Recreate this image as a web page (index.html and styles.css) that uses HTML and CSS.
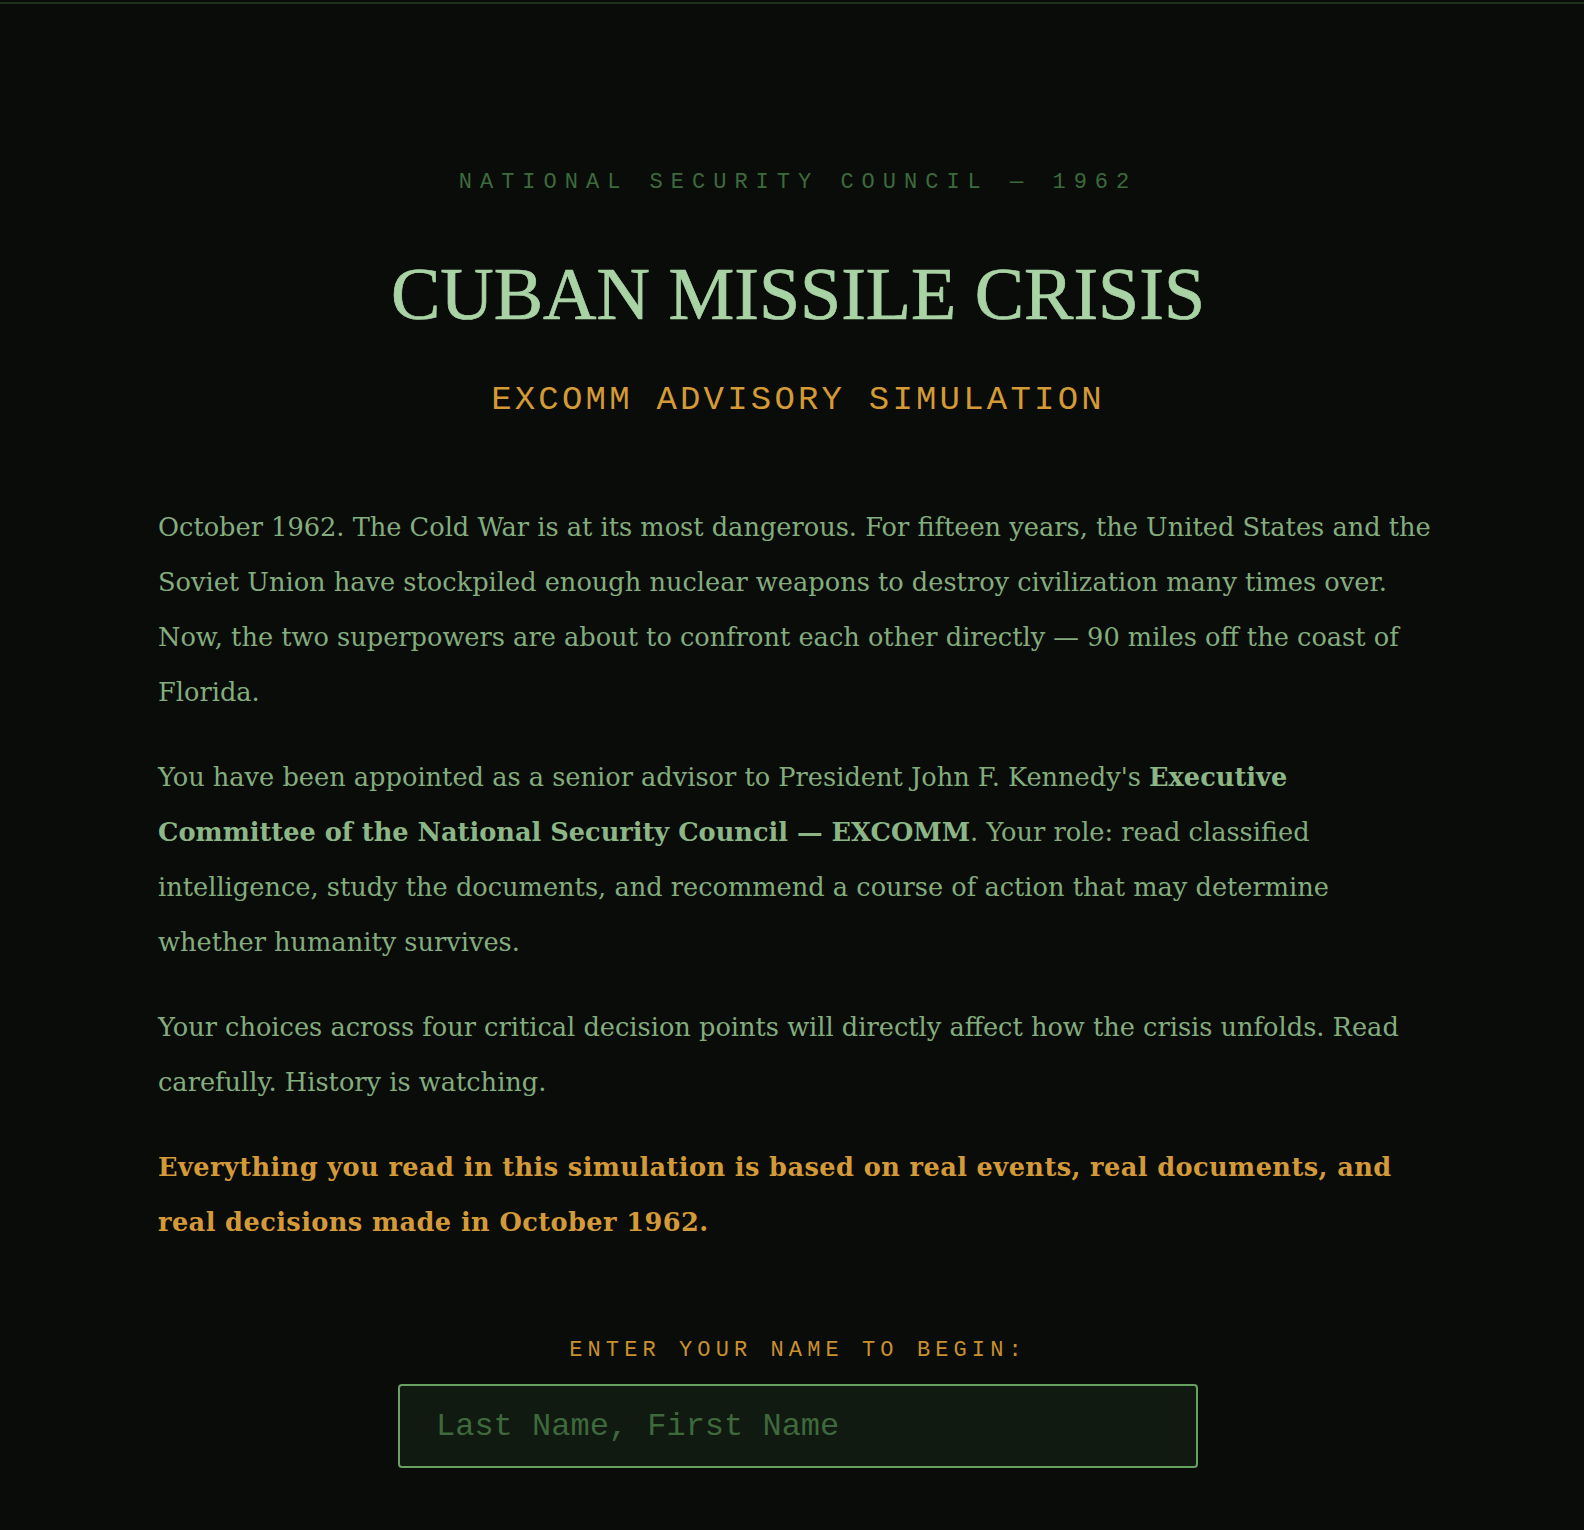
FILE: index.html
```html
<!DOCTYPE html>
<html lang="en">
<head>
<meta charset="utf-8">
<title>Cuban Missile Crisis — EXCOMM Advisory Simulation</title>
<link rel="stylesheet" href="styles.css">
</head>
<body>
<div class="topline"></div>
<main class="page">
  <section class="intro">
    <header class="masthead">
      <p class="kicker">National Security Council — 1962</p>
      <h1 class="title">CUBAN MISSILE CRISIS</h1>
      <p class="subtitle">EXCOMM Advisory Simulation</p>
    </header>

    <div class="briefing">
      <p>October 1962. The Cold War is at its most dangerous. For fifteen years, the United States and the Soviet Union have stockpiled enough nuclear weapons to destroy civilization many times over. Now, the two superpowers are about to confront each other directly — 90 miles off the coast of Florida.</p>
      <p>You have been appointed as a senior advisor to President John F. Kennedy's <strong>Executive Committee of the National Security Council — EXCOMM</strong>. Your role: read classified intelligence, study the documents, and recommend a course of action that may determine whether humanity survives.</p>
      <p>Your choices across four critical decision points will directly affect how the crisis unfolds. Read carefully. History is watching.</p>
      <p class="notice">Everything you read in this simulation is based on real events, real documents, and real decisions made in October 1962.</p>
    </div>

    <form class="signin" onsubmit="return false">
      <label class="signin-label" for="player-name">Enter your name to begin:</label>
      <input class="signin-input" id="player-name" type="text" placeholder="Last Name, First Name" autocomplete="off">
    </form>
  </section>
</main>
</body>
</html>
```
FILE: styles.css
```css
* {
  box-sizing: border-box;
}

html,
body {
  margin: 0;
  padding: 0;
  background: #0a0c0a;
}

body {
  min-height: 1530px;
  color: #84ad7e;
}

.topline {
  height: 2px;
  margin-top: 2px;
  background: #1d2f1d;
}

.page {
  padding-left: 12px;
}

.intro {
  width: 1280px;
  margin: 0 auto;
  padding-top: 165px;
}

/* ---------- masthead ---------- */

.masthead {
  display: flex;
  flex-direction: column;
  align-items: center;
  text-align: center;
}

.kicker {
  margin: 0;
  font-family: "Liberation Mono", "Courier New", monospace;
  font-size: 22px;
  line-height: 28px;
  letter-spacing: 8px;
  text-transform: uppercase;
  color: #3d6a3c;
}

.title {
  margin: 53px 0 0;
  font-family: "Liberation Serif", "Times New Roman", serif;
  font-size: 74px;
  font-weight: 400;
  line-height: 89px;
  color: #a9d3a5;
  -webkit-text-stroke: 0.7px #a9d3a5;
}

.subtitle {
  margin: 41px 0 0;
  font-family: "Liberation Mono", "Courier New", monospace;
  font-size: 34px;
  line-height: 40px;
  letter-spacing: 3.2px;
  text-transform: uppercase;
  color: #d39a35;
}

/* ---------- briefing text ---------- */

.briefing {
  margin-top: 80px;
  font-family: "DejaVu Serif", Georgia, serif;
  font-size: 25.65px;
  line-height: 55px;
  color: #84ad7e;
}

.briefing p {
  margin: 0 0 30px;
}

.briefing strong {
  font-weight: 700;
  color: #8cb686;
}

.briefing .notice {
  margin-bottom: 0;
  font-weight: 700;
  letter-spacing: 0.4px;
  color: #d49a38;
}

/* ---------- name entry ---------- */

.signin {
  display: flex;
  flex-direction: column;
  align-items: center;
  margin-top: 87px;
}

.signin-label {
  font-family: "Liberation Mono", "Courier New", monospace;
  font-size: 22px;
  line-height: 28px;
  letter-spacing: 5.1px;
  text-transform: uppercase;
  color: #c8902e;
}

.signin-input {
  width: 800px;
  height: 84px;
  margin-top: 19px;
  padding: 0 36px;
  border: 2px solid #67a060;
  border-radius: 4px;
  background: #111a11;
  font-family: "Liberation Mono", "Courier New", monospace;
  font-size: 32px;
  color: #a9d3a5;
  outline: none;
}

.signin-input::placeholder {
  color: #3e693c;
  opacity: 1;
}
```
